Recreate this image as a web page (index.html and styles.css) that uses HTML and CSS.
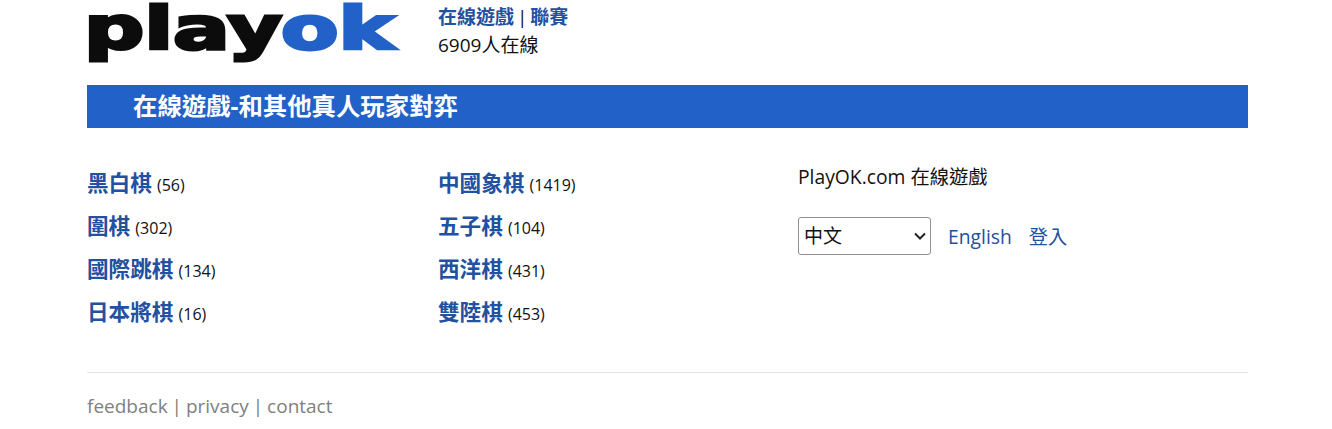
FILE: index.html
```html
<!DOCTYPE html>
<html lang="zh-Hant">
<head>
<meta charset="UTF-8">
<title>PlayOK 在線遊戲</title>
<link rel="stylesheet" href="styles.css">
</head>
<body>
<div class="wrap">
  <div class="top">
    <a class="logo" href="#">
      <svg width="314" height="64" viewBox="0 0 314 64">
        <text class="logo-text" x="-3" y="49" textLength="198" lengthAdjust="spacingAndGlyphs" fill="#0c0c0c" stroke="#0c0c0c">play</text>
        <text class="logo-text" x="194" y="49" textLength="113" lengthAdjust="spacingAndGlyphs" fill="#2261c8" stroke="#2261c8">ok</text>
      </svg>
    </a>
    <div class="top-info">
      <div class="links"><a class="strong" href="#">在線遊戲</a> | <a class="strong" href="#">聯賽</a></div>
      <div>6909人在線</div>
    </div>
  </div>

  <h1 class="banner">在線遊戲-和其他真人玩家對弈</h1>

  <div class="main">
    <ul class="games">
      <li><a href="#">黑白棋</a> <span>(56)</span></li>
      <li><a href="#">圍棋</a> <span>(302)</span></li>
      <li><a href="#">國際跳棋</a> <span>(134)</span></li>
      <li><a href="#">日本將棋</a> <span>(16)</span></li>
    </ul>
    <ul class="games">
      <li><a href="#">中國象棋</a> <span>(1419)</span></li>
      <li><a href="#">五子棋</a> <span>(104)</span></li>
      <li><a href="#">西洋棋</a> <span>(431)</span></li>
      <li><a href="#">雙陸棋</a> <span>(453)</span></li>
    </ul>
    <div class="side">
      <p>PlayOK.com 在線遊戲</p>
      <div class="lang">
        <select>
          <option>中文</option>
          <option>English</option>
        </select>
        <a href="#">English</a>
        <a href="#">登入</a>
      </div>
    </div>
  </div>

  <div class="foot"><a href="#">feedback</a> | <a href="#">privacy</a> | <a href="#">contact</a></div>
</div>
</body>
</html>
```

FILE: styles.css
```css
body { margin: 0; background: #fff; color: #111; font-family: "Open Sans", "Noto Sans CJK TC", sans-serif; font-size: 19px; }
a { color: #23509f; text-decoration: none; }
ul { list-style: none; margin: 0; padding: 0; }
p { margin: 0; }

.wrap { width: 1161px; margin-left: 87px; }

.top { display: flex; height: 85px; }
.logo { display: block; width: 351px; height: 64px; }
.logo svg { overflow: visible; }
.logo-text { font-family: "DejaVu Sans", sans-serif; font-weight: 700; font-size: 58px; stroke-width: 3px; }
.top-info { padding-top: 3px; line-height: 28px; font-size: 19px; }
.links { word-spacing: -2px; }
.strong { font-weight: 700; }

.banner { margin: 0; height: 43px; padding-left: 46px; background: #2261c8; color: #fff; font-size: 24.4px; font-weight: 700; line-height: 41px; }

.main { display: grid; grid-template-columns: 351px 360px 1fr; padding-top: 33px; height: 245px; box-sizing: border-box; border-bottom: 1px solid #e4e4e4; }
.games li { height: 43px; line-height: 43px; font-size: 16px; }
.games a { font-size: 21.6px; font-weight: 700; }
.games span { margin-left: 1px; }

.side { padding-top: 2px; }
.side p { line-height: 28px; margin-bottom: 26px; font-size: 19.3px; }
.lang { display: flex; align-items: center; gap: 17px; }
.lang select { width: 133px; height: 38px; padding-left: 5px; appearance: none; background: #fff url("data:image/svg+xml,%3Csvg xmlns='http://www.w3.org/2000/svg' width='12' height='8'%3E%3Cpath d='M1 1.5l5 5 5-5' fill='none' stroke='%23222' stroke-width='2'/%3E%3C/svg%3E") no-repeat right 4px center; border: 1px solid #8f8f8f; border-radius: 3px; color: #111; font-family: inherit; font-size: 19px; }
.lang a { font-size: 19.3px; }

.foot { padding-top: 19px; color: #808080; font-size: 19px; line-height: 28px; word-spacing: -1px; }
.foot a { color: #808080; }
```
